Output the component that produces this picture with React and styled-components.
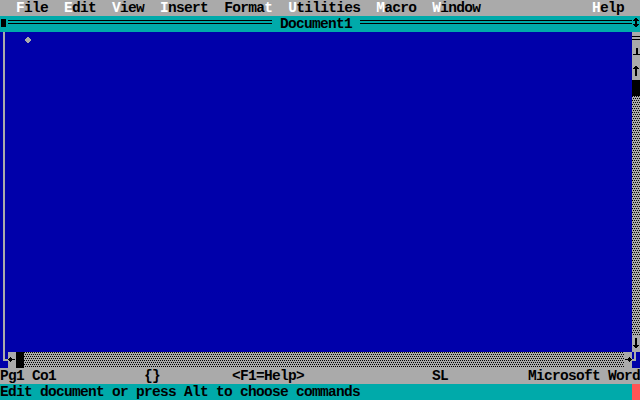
import React from "react"
import styled, { createGlobalStyle } from "styled-components"

const GRAY = "#aaaaaa"
const CYAN = "#00aaaa"
const BLUE = "#0000aa"

const GlobalStyle = createGlobalStyle`
  html, body {
    margin: 0;
    padding: 0;
    background: #000;
  }
  body {
    width: 640px;
    height: 400px;
    overflow: hidden;
  }
`

const Screen = styled.div`
  width: 640px;
  height: 400px;
  display: grid;
  grid-template-rows: 16px 16px 336px 16px 16px;
  font-family: "Liberation Mono", "DejaVu Sans Mono", monospace;
  font-size: 14.5px;
  letter-spacing: -0.7px;
  font-weight: bold;
  line-height: 16px;
  color: #000;
  white-space: pre;
`

const MenuBar = styled.div`
  display: flex;
  gap: 16px;
  padding: 0 16px;
  background: ${GRAY};
`

const MenuItem = styled.span`
  margin-left: ${(p) => (p.$right ? "auto" : "0")};
`

const Hot = styled.span`
  color: #fff;
`

const TitleBar = styled.div`
  display: flex;
  background: ${CYAN};
`

const Cell = styled.div`
  width: 8px;
  height: 16px;
  flex: none;
  background: ${(p) => p.$bg || "transparent"};
  svg {
    display: block;
  }
`

const Rule = styled.div`
  height: 16px;
  flex: ${(p) => (p.$cols ? "none" : "1")};
  width: ${(p) => (p.$cols ? p.$cols * 8 + "px" : "auto")};
  background:
    linear-gradient(#000, #000) 0 4px / 100% 1px no-repeat,
    linear-gradient(#000, #000) 0 7px / 100% 1px no-repeat;
`

const Title = styled.span`
  flex: none;
  width: 88px;
`

const Body = styled.div`
  display: grid;
  grid-template-columns: 8px 1fr 8px;
  grid-template-rows: 320px 16px;
  background: ${BLUE};
`

const Rail = styled.div`
  background: linear-gradient(${GRAY}, ${GRAY}) 3px 0 / 2px 100% no-repeat;
`

const Document = styled.div`
  padding: 4px 0 0 16px;
  svg {
    display: block;
  }
`

const VScroll = styled.div`
  display: flex;
  flex-direction: column;
  background: ${GRAY};
`

const dither = `
  background-color: ${GRAY};
  background-image:
    conic-gradient(at 1px 1px, transparent 75%, #000 0),
    conic-gradient(at 1px 1px, transparent 75%, #000 0);
  background-size: 2px 4px;
  background-position: 0 0, 1px 2px;
`

const VTrack = styled.div`
  flex: 1;
  ${dither}
`

const HScroll = styled.div`
  display: flex;
  background: ${GRAY};
`

const HTrack = styled.div`
  flex: 1;
  ${dither}
`

const Thumb = styled.div`
  width: 8px;
  height: 16px;
  flex: none;
  background: #000;
`

const StatusBar = styled.div`
  background: ${GRAY};
`

const MessageBar = styled.div`
  display: flex;
  background: ${CYAN};
`

const Message = styled.span`
  flex: 1;
`

const Glyph = ({ children }) => (
  <svg width="8" height="16" viewBox="0 0 8 16" shapeRendering="crispEdges">
    {children}
  </svg>
)

const menus = [
  ["File", 0],
  ["Edit", 0],
  ["View", 0],
  ["Insert", 0],
  ["Format", 5],
  ["Utilities", 0],
  ["Macro", 0],
  ["Window", 0],
]

function Menu({ label, hot, right }) {
  return (
    <MenuItem $right={right}>
      {label.slice(0, hot)}
      <Hot>{label[hot]}</Hot>
      {label.slice(hot + 1)}
    </MenuItem>
  )
}

// columns on the 80-col status line
const status = [
  ["Pg1 Co1", 0],
  ["{}", 18],
  ["<F1=Help>", 29],
  ["SL", 54],
  ["Microsoft Word", 66],
]

function statusLine() {
  let line = ""
  status.forEach(([text, col]) => {
    line = line.padEnd(col, " ") + text
  })
  return line
}

export default function App() {
  return (
    <>
      <GlobalStyle />
      <Screen>
        <MenuBar>
          {menus.map(([label, hot]) => (
            <Menu key={label} label={label} hot={hot} />
          ))}
          <Menu label="Help" hot={0} right />
        </MenuBar>

        <TitleBar>
          <Cell>
            <Glyph>
              <rect x="1" y="3" width="5" height="8" fill="#000" />
            </Glyph>
          </Cell>
          <Rule $cols={33} />
          <Title> Document1 </Title>
          <Rule />
          <Cell>
            <Glyph>
              <rect x="3" y="2" width="2" height="1" fill="#000" />
              <rect x="2" y="3" width="4" height="1" fill="#000" />
              <rect x="1" y="4" width="6" height="1" fill="#000" />
              <rect x="3" y="5" width="2" height="3" fill="#000" />
              <rect x="1" y="8" width="6" height="1" fill="#000" />
              <rect x="2" y="9" width="4" height="1" fill="#000" />
              <rect x="3" y="10" width="2" height="1" fill="#000" />
            </Glyph>
          </Cell>
        </TitleBar>

        <Body>
          <Rail />
          <Document>
            <svg width="8" height="8" viewBox="0 0 8 8" shapeRendering="crispEdges">
              <polygon points="4,0.5 7.5,4 4,7.5 0.5,4" fill={GRAY} />
            </svg>
          </Document>
          <VScroll>
            <Cell>
              <Glyph>
                <rect x="0" y="4" width="8" height="1" fill="#000" />
                <rect x="0" y="7" width="8" height="1" fill="#000" />
              </Glyph>
            </Cell>
            <Cell>
              <Glyph>
                <rect x="4" y="0" width="2" height="6" fill="#000" />
                <rect x="1" y="6" width="7" height="1" fill="#000" />
              </Glyph>
            </Cell>
            <Cell>
              <Glyph>
                <rect x="3" y="2" width="2" height="1" fill="#000" />
                <rect x="2" y="3" width="4" height="1" fill="#000" />
                <rect x="1" y="4" width="6" height="1" fill="#000" />
                <rect x="3" y="5" width="2" height="7" fill="#000" />
              </Glyph>
            </Cell>
            <Thumb />
            <VTrack />
            <Cell>
              <Glyph>
                <rect x="3" y="2" width="2" height="7" fill="#000" />
                <rect x="1" y="9" width="6" height="1" fill="#000" />
                <rect x="2" y="10" width="4" height="1" fill="#000" />
                <rect x="3" y="11" width="2" height="1" fill="#000" />
              </Glyph>
            </Cell>
          </VScroll>

          <Cell>
            <Glyph>
              <rect x="3" y="0" width="2" height="9" fill={GRAY} />
              <rect x="3" y="7" width="5" height="2" fill={GRAY} />
            </Glyph>
          </Cell>
          <HScroll>
            <Cell>
              <Glyph>
                <rect x="2" y="5" width="1" height="5" fill="#000" />
                <rect x="1" y="6" width="1" height="3" fill="#000" />
                <rect x="0" y="7" width="7" height="1" fill="#000" />
                <rect x="3" y="6" width="1" height="3" fill="#000" />
              </Glyph>
            </Cell>
            <Thumb />
            <HTrack />
            <Cell>
              <Glyph>
                <rect x="5" y="5" width="1" height="5" fill="#000" />
                <rect x="6" y="6" width="1" height="3" fill="#000" />
                <rect x="1" y="7" width="7" height="1" fill="#000" />
                <rect x="4" y="6" width="1" height="3" fill="#000" />
              </Glyph>
            </Cell>
          </HScroll>
          <Cell>
            <Glyph>
              <rect x="2" y="0" width="2" height="9" fill={GRAY} />
              <rect x="0" y="7" width="4" height="2" fill={GRAY} />
            </Glyph>
          </Cell>
        </Body>

        <StatusBar>{statusLine()}</StatusBar>

        <MessageBar>
          <Message>Edit document or press Alt to choose commands</Message>
          <Cell $bg="#ff5555" />
        </MessageBar>
      </Screen>
    </>
  )
}
